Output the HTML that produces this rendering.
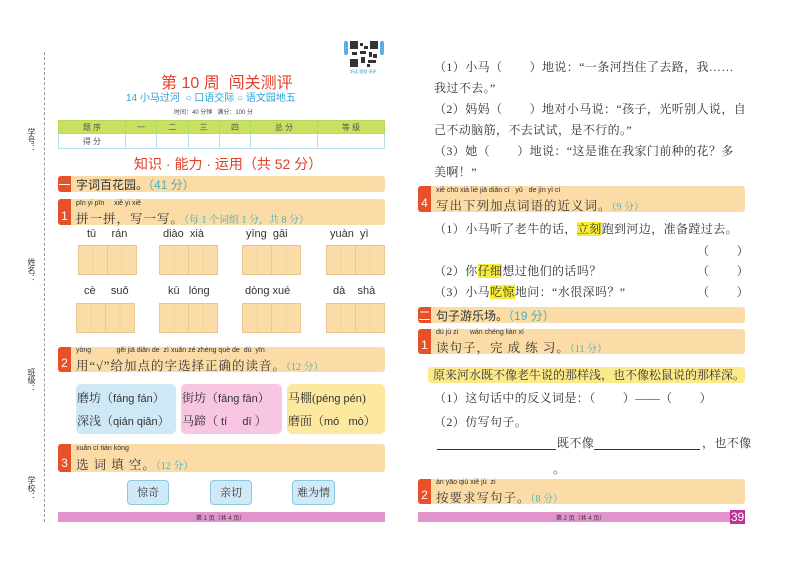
<!DOCTYPE html>
<html><head><meta charset="utf-8"><style>
*{margin:0;padding:0;box-sizing:border-box}
body{width:800px;height:566px;background:#fff;position:relative;overflow:hidden;font-family:"Liberation Serif","Noto Serif CJK SC",serif;color:#333}
.a{position:absolute;white-space:nowrap}
.s{font-family:"Liberation Sans","Noto Sans CJK SC",sans-serif}
.bar{position:absolute;background:#fbdca6;border-radius:3px}
.tab{position:absolute;left:0;top:0;bottom:0;width:13px;background:#e8502a;color:#fff;font-family:"Liberation Sans","Noto Sans CJK SC",sans-serif;font-size:12px;display:flex;align-items:flex-end;justify-content:center;padding-bottom:2px;border-radius:3px 0 0 3px}
.py{position:absolute;font-size:7px;font-family:"Liberation Sans",sans-serif;color:#333}
.tt{position:absolute;font-size:12.5px;letter-spacing:1px}
.sc{color:#4bb0c0}
.box{position:absolute;background:#fbdca6;border:1px solid #e8c890;display:flex}
.box div{flex:1;border-right:1px solid #e8c890;background:linear-gradient(90deg,transparent 49%,#f3cf98 49%,#f3cf98 51%,transparent 51%)}
.box div:last-child{border-right:none}
.pyl{position:absolute;font-size:11px;font-family:"Liberation Sans",sans-serif;color:#333}
.opt{position:absolute;border-radius:5px;font-size:12px;padding:3px 1px;line-height:22px;white-space:nowrap;overflow:hidden}
.opt i{font-style:normal;font-family:"Liberation Sans",sans-serif;font-size:11px}
.btn{position:absolute;background:#cfe9f6;border:1px solid #8cc8e0;border-radius:4px;font-size:11px;text-align:center;line-height:24px;height:25px}
.r{font-size:12px;position:absolute;white-space:nowrap;letter-spacing:0.4px}
.hl{background:#f7ec3a}
</style></head><body>
<div class="a" style="left:44px;top:52px;height:470px;border-left:1px dashed #999"></div>
<div class="a s" style="left:26px;top:128px;font-size:8px;writing-mode:vertical-rl">学号：</div>
<div class="a s" style="left:26px;top:258px;font-size:8px;writing-mode:vertical-rl">姓名：</div>
<div class="a s" style="left:26px;top:368px;font-size:8px;writing-mode:vertical-rl">班级：</div>
<div class="a s" style="left:26px;top:476px;font-size:8px;writing-mode:vertical-rl">学校：</div>

<svg class="a" style="left:343px;top:40px" width="42" height="34" viewBox="0 0 42 34">
<rect x="1" y="1" width="4" height="14" rx="2" fill="#5ab0e0"/><rect x="37" y="1" width="4" height="14" rx="2" fill="#5ab0e0"/>
<rect x="7" y="1" width="28" height="26" fill="#fff"/>
<rect x="7" y="1" width="8" height="8" fill="#333"/><rect x="27" y="1" width="8" height="8" fill="#333"/><rect x="7" y="19" width="8" height="8" fill="#333"/>
<rect x="17" y="3" width="3" height="3" fill="#333"/><rect x="21" y="6" width="4" height="3" fill="#333"/><rect x="17" y="11" width="6" height="3" fill="#333"/><rect x="26" y="12" width="3" height="5" fill="#333"/><rect x="9" y="12" width="5" height="3" fill="#333"/><rect x="18" y="17" width="4" height="6" fill="#333"/><rect x="25" y="20" width="8" height="3" fill="#333"/><rect x="30" y="14" width="4" height="4" fill="#333"/><rect x="24" y="24" width="3" height="3" fill="#333"/>
<text x="7" y="33" font-size="4" fill="#3a9ad8" font-family="Liberation Sans,Noto Sans CJK SC,sans-serif">听读 视频 讲评</text>
</svg>

<div class="a s" style="left:161px;top:69px;font-size:16px;color:#e2402a">第 10 周&nbsp; 闯关测评</div>
<div class="a s" style="left:126px;top:89px;font-size:10px;color:#2ea0d8">14 小马过河 &nbsp;○ 口语交际 ○ 语文园地五</div>
<div class="a s" style="left:174px;top:107px;font-size:6px;color:#444">时间：40 分钟&nbsp;&nbsp; 满分：100 分</div>

<table class="a s" style="left:58px;top:120px;width:327px;border-collapse:collapse;font-size:8px;color:#555;text-align:center">
<tr style="background:#c8e160;height:13px"><td style="border:1px solid #b8d860">题 序</td><td style="border:1px solid #b8d860">一</td><td style="border:1px solid #b8d860">二</td><td style="border:1px solid #b8d860">三</td><td style="border:1px solid #b8d860">四</td><td style="border:1px solid #b8d860">总 分</td><td style="border:1px solid #b8d860">等 级</td></tr>
<tr style="height:15px"><td style="border:1px solid #b8e0f0">得 分</td><td style="border:1px solid #b8e0f0"></td><td style="border:1px solid #b8e0f0"></td><td style="border:1px solid #b8e0f0"></td><td style="border:1px solid #b8e0f0"></td><td style="border:1px solid #b8e0f0"></td><td style="border:1px solid #b8e0f0"></td></tr>
</table>

<div class="a s" style="left:134px;top:154px;font-size:14px;color:#e2402a">知识 · 能力 · 运用（共 52 分）</div>

<div class="bar" style="left:58px;top:176px;width:327px;height:16px"><div class="tab" style="align-items:center;padding:0">一</div><div class="a s" style="left:18px;top:0px;font-size:12px">字词百花园。<span class="sc">（41 分）</span></div></div>

<div class="bar" style="left:58px;top:199px;width:327px;height:26px"><div class="tab">1</div><div class="py" style="left:18px;top:1px">pīn yi pīn&nbsp;&nbsp;&nbsp;&nbsp; xiě yi xiě</div><div class="tt" style="left:18px;top:10px">拼一拼，写一写。<span class="sc" style="font-size:10px;letter-spacing:0">（每 1 个词组 1 分，共 8 分）</span></div></div>

<div class="pyl" style="left:87px;top:228px">tū&nbsp;&nbsp;&nbsp;&nbsp; rán</div>
<div class="pyl" style="left:163px;top:228px">diào&nbsp; xià</div>
<div class="pyl" style="left:246px;top:228px">yīng&nbsp; gāi</div>
<div class="pyl" style="left:330px;top:228px">yuàn&nbsp; yì</div>
<div class="box" style="left:78px;top:245px;width:59px;height:30px"><div></div><div></div></div>
<div class="box" style="left:159px;top:245px;width:59px;height:30px"><div></div><div></div></div>
<div class="box" style="left:242px;top:245px;width:59px;height:30px"><div></div><div></div></div>
<div class="box" style="left:326px;top:245px;width:59px;height:30px"><div></div><div></div></div>
<div class="pyl" style="left:84px;top:285px">cè&nbsp;&nbsp;&nbsp;&nbsp; suǒ</div>
<div class="pyl" style="left:168px;top:285px">kū&nbsp;&nbsp; lóng</div>
<div class="pyl" style="left:245px;top:285px">dòng xué</div>
<div class="pyl" style="left:333px;top:285px">dà&nbsp;&nbsp;&nbsp; shà</div>
<div class="box" style="left:76px;top:303px;width:59px;height:30px"><div></div><div></div></div>
<div class="box" style="left:159px;top:303px;width:59px;height:30px"><div></div><div></div></div>
<div class="box" style="left:242px;top:303px;width:59px;height:30px"><div></div><div></div></div>
<div class="box" style="left:326px;top:303px;width:59px;height:30px"><div></div><div></div></div>

<div class="bar" style="left:58px;top:347px;width:327px;height:25px"><div class="tab">2</div><div class="py" style="left:18px;top:0px">yòng&nbsp;&nbsp;&nbsp;&nbsp;&nbsp;&nbsp;&nbsp;&nbsp;&nbsp;&nbsp;&nbsp;&nbsp; gěi jiā diǎn de&nbsp; zì xuǎn zé zhèng què de&nbsp; dú&nbsp; yīn</div><div class="tt" style="left:18px;top:9px">用“√”给加点的字选择正确的读音。<span class="sc" style="font-size:10px;letter-spacing:0">（12 分）</span></div></div>

<div class="opt" style="left:76px;top:384px;width:100px;height:50px;background:#cfe8f6">磨坊（<i>fáng fán</i>）<br>深浅（<i>qián qiǎn</i>）</div>
<div class="opt" style="left:181px;top:384px;width:101px;height:50px;background:#f8c6e2">街坊（<i>fāng fān</i>）<br>马蹄（ <i>tí&nbsp;&nbsp;&nbsp;&nbsp; dī</i> ）</div>
<div class="opt" style="left:287px;top:384px;width:98px;height:50px;background:#fde8a0">马棚(<i>péng pén</i>)<br>磨面（<i>mó&nbsp;&nbsp; mò</i>）</div>

<div class="bar" style="left:58px;top:444px;width:327px;height:28px"><div class="tab">3</div><div class="py" style="left:18px;top:1px">xuǎn cí tián kòng</div><div class="tt" style="left:18px;top:11px">选 词 填 空。<span class="sc" style="font-size:10px;letter-spacing:0">（12 分）</span></div></div>

<div class="btn" style="left:127px;top:480px;width:42px">惊奇</div>
<div class="btn" style="left:210px;top:480px;width:42px">亲切</div>
<div class="btn" style="left:292px;top:480px;width:43px">难为情</div>

<div class="a" style="left:58px;top:512px;width:327px;height:10px;background:#e094cb"></div>
<div class="a s" style="left:196px;top:513px;font-size:6px">第 1 页（共 4 页）</div>
<div class="a" style="left:418px;top:512px;width:327px;height:10px;background:#e094cb"></div>
<div class="a s" style="left:556px;top:513px;font-size:6px">第 2 页（共 4 页）</div>
<div class="a s" style="left:730px;top:510px;width:15px;height:14px;background:#c0309a;color:#fff;font-size:12px;line-height:14px;text-align:center">39</div>

<div class="r" style="left:434px;top:58px">（1）小马（&nbsp;&nbsp;&nbsp;&nbsp;&nbsp;&nbsp;&nbsp;&nbsp;）地说：“一条河挡住了去路，我……</div>
<div class="r" style="left:434px;top:79px">我过不去。”</div>
<div class="r" style="left:434px;top:100px">（2）妈妈（&nbsp;&nbsp;&nbsp;&nbsp;&nbsp;&nbsp;&nbsp;&nbsp;）地对小马说：“孩子，光听别人说，自</div>
<div class="r" style="left:434px;top:121px">己不动脑筋，不去试试，是不行的。”</div>
<div class="r" style="left:434px;top:142px">（3）她（&nbsp;&nbsp;&nbsp;&nbsp;&nbsp;&nbsp;&nbsp;&nbsp;）地说：“这是谁在我家门前种的花？多</div>
<div class="r" style="left:434px;top:163px">美啊！”</div>

<div class="bar" style="left:418px;top:186px;width:327px;height:26px"><div class="tab">4</div><div class="py" style="left:18px;top:1px">xiě chū xià liè jiā diǎn cí&nbsp;&nbsp; yǔ&nbsp;&nbsp; de jìn yì cí</div><div class="tt" style="left:18px;top:10px">写出下列加点词语的近义词。<span class="sc" style="font-size:10px;letter-spacing:0">（9 分）</span></div></div>

<div class="r" style="left:434px;top:220px">（1）小马听了老牛的话，<span class="hl">立刻</span>跑到河边，准备蹚过去。</div>
<div class="r" style="left:697px;top:242px">（&nbsp;&nbsp;&nbsp;&nbsp;&nbsp;&nbsp;&nbsp;&nbsp;）</div>
<div class="r" style="left:434px;top:262px">（2）你<span class="hl">仔细</span>想过他们的话吗？</div>
<div class="r" style="left:697px;top:262px">（&nbsp;&nbsp;&nbsp;&nbsp;&nbsp;&nbsp;&nbsp;&nbsp;）</div>
<div class="r" style="left:434px;top:283px">（3）小马<span class="hl">吃惊</span>地问：“水很深吗？”</div>
<div class="r" style="left:697px;top:283px">（&nbsp;&nbsp;&nbsp;&nbsp;&nbsp;&nbsp;&nbsp;&nbsp;）</div>

<div class="bar" style="left:418px;top:307px;width:327px;height:16px"><div class="tab" style="align-items:center;padding:0">二</div><div class="a s" style="left:18px;top:0px;font-size:12px">句子游乐场。<span class="sc">（19 分）</span></div></div>

<div class="bar" style="left:418px;top:329px;width:327px;height:25px"><div class="tab">1</div><div class="py" style="left:18px;top:0px">dú jù zi&nbsp;&nbsp;&nbsp;&nbsp;&nbsp; wán chéng liàn xí</div><div class="tt" style="left:18px;top:9px">读句子，完 成 练 习。<span class="sc" style="font-size:10px;letter-spacing:0">（11 分）</span></div></div>

<div class="a" style="left:428px;top:367px;width:317px;height:16px;background:#fbe98a;border-radius:4px"></div>
<div class="r" style="left:433px;top:366px;letter-spacing:0">原来河水既不像老牛说的那样浅，也不像松鼠说的那样深。</div>
<div class="r" style="left:434px;top:389px">（1）这句话中的反义词是：（&nbsp;&nbsp;&nbsp;&nbsp;&nbsp;&nbsp;&nbsp;&nbsp;）——（&nbsp;&nbsp;&nbsp;&nbsp;&nbsp;&nbsp;&nbsp;&nbsp;）</div>
<div class="r" style="left:434px;top:413px">（2）仿写句子。</div>
<div class="a" style="left:437px;top:449px;width:119px;border-top:1px solid #333"></div>
<div class="r" style="left:557px;top:434px">既不像</div>
<div class="a" style="left:594px;top:449px;width:106px;border-top:1px solid #333"></div>
<div class="r" style="left:702px;top:434px">，也不像</div>
<div class="r" style="left:553px;top:460px">。</div>

<div class="bar" style="left:418px;top:479px;width:327px;height:25px"><div class="tab">2</div><div class="py" style="left:18px;top:0px">àn yāo qiú xiě jù&nbsp; zi</div><div class="tt" style="left:18px;top:9px">按要求写句子。<span class="sc" style="font-size:10px;letter-spacing:0">（8 分）</span></div></div>
</body></html>
